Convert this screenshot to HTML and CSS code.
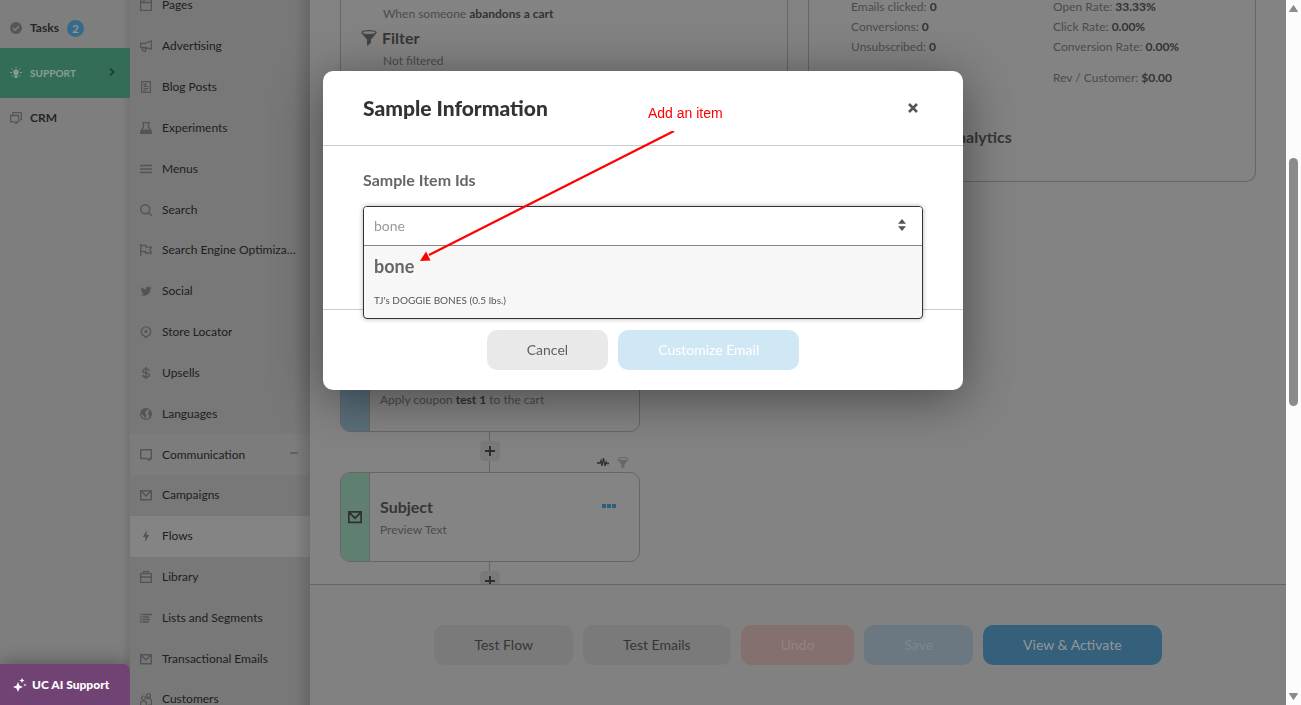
FILE: index.html
```html
<!DOCTYPE html>
<html lang="en">
<head>
<meta charset="utf-8">
<title>Flows</title>
<link rel="stylesheet" href="styles.css">
</head>
<body>
<svg class="defs" aria-hidden="true">
  <symbol id="mail" viewBox="0 0 12 12"><path d="M.7 1.700h10.600v9H.7zM1 2l5 5 5-5" fill="none" stroke="currentColor" stroke-width="1.500"/></symbol>
  <symbol id="funnel" viewBox="0 0 16 16"><ellipse cx="8" cy="2.600" rx="7" ry="2" fill="none" stroke="currentColor" stroke-width="1.200"/><path d="M.6 3.400C3 5.400 13 5.400 15.400 3.400L10 9.500V13l-4 3V9.500z" fill="currentColor"/></symbol>
  <symbol id="plus" viewBox="0 0 10 10"><path d="M5 0v10M0 5h10" stroke="currentColor" stroke-width="2"/></symbol>
</svg>
<div class="app">
  <aside class="rail">
    <nav class="rail-nav">
      <a class="rail-link" href="#"><svg class="icon faint" viewBox="0 0 12 12"><circle cx="6" cy="6" r="6" fill="currentColor"/><path d="M3 6l2.200 2.200L9 4.300" fill="none" stroke="#7f7f7f" stroke-width="1.500"/></svg>Tasks<span class="count">2</span></a>
      <a class="rail-link support" href="#"><svg class="icon" viewBox="0 0 12 12"><path d="M6 2.500a2.800 2.800 0 0 0-1.500 5.200V11h3V7.700A2.800 2.800 0 0 0 6 2.500z" fill="currentColor"/><path d="M6 0v1.500M0 5.500h2M10 5.500h2M1.500 1.500l1.300 1.300M10.500 1.500L9.200 2.800M1.500 9.500l1.300-1.200M10.500 9.500L9.200 8.300" stroke="currentColor"/></svg>SUPPORT<svg class="chevron" viewBox="0 0 6 8"><path d="M1 .5L4.500 4 1 7.500" fill="none" stroke="currentColor" stroke-width="1.600"/></svg></a>
      <a class="rail-link" href="#"><svg class="icon faint" viewBox="0 0 12 12"><path d="M3 2.500V.6h8.400v7H10M.6 3.500h8v6.400H6.500V12L4.500 9.900H.6z" fill="none" stroke="currentColor" stroke-width="1.300"/></svg>CRM</a>
    </nav>
    <button class="ai-button" type="button"><svg class="spark" viewBox="0 0 14 14"><path d="M5 4l1.400 3.600L10 9l-3.600 1.400L5 14l-1.400-3.600L0 9l3.600-1.400zM9 0l.8 1.700 1.700.8-1.700.8L9 5l-.8-1.700-1.700-.8 1.700-.8zM12 5.500l.4 1.100 1.100.4-1.100.4L12 8.500l-.4-1.100-1.100-.4 1.100-.4z" fill="currentColor"/></svg>UC AI Support</button>
  </aside>

  <nav class="menu">
    <ul class="menu-list">
      <li><a href="#"><svg class="icon" viewBox="0 0 12 12"><path d="M.6.6h10.800v10.800H.6zM.6 3.500h10.800M4 .6v2.900" fill="none" stroke="currentColor" stroke-width="1.300"/></svg><span>Pages</span></a></li>
      <li><a href="#"><svg class="icon" viewBox="0 0 12 12"><path d="M11.400 1v8L5 7.500H.6v-4H5zM2.500 7.500v3l3 1V8" fill="none" stroke="currentColor" stroke-width="1.300"/></svg><span>Advertising</span></a></li>
      <li><a href="#"><svg class="icon" viewBox="0 0 12 12"><path d="M1.600.6h8.800v10.800H1.600zM3.500 5.500h5M3.500 7.500h5M3.500 9.300h3" fill="none" stroke="currentColor" stroke-width="1.200"/><path d="M3.500 2.500h3v2h-3z" fill="currentColor"/></svg><span>Blog Posts</span></a></li>
      <li><a href="#"><svg class="icon" viewBox="0 0 12 12"><path d="M2 .6h8M3.500.6V5L.8 9v2.400h10.400V9L8.500 5V.6" fill="none" stroke="currentColor" stroke-width="1.300"/><path d="M2.500 7.500h7l2 2.500v2H.6v-2z" fill="currentColor"/></svg><span>Experiments</span></a></li>
      <li><a href="#"><svg class="icon" viewBox="0 0 12 12"><path d="M0 2.500h12M0 6h12M0 9.500h12" stroke="currentColor" stroke-width="1.300"/></svg><span>Menus</span></a></li>
      <li><a href="#"><svg class="icon" viewBox="0 0 12 12"><circle cx="5.200" cy="5.200" r="4.500" fill="none" stroke="currentColor" stroke-width="1.400"/><path d="M8.500 8.500L12 12" stroke="currentColor" stroke-width="1.500"/></svg><span>Search</span></a></li>
      <li><a href="#"><svg class="icon" viewBox="0 0 12 12"><path d="M.7 0v12M.6 1.500H6v1.700h5.400L10 6l1.400 3H5.500V7.500H.6" fill="none" stroke="currentColor" stroke-width="1.300"/></svg><span>Search Engine Optimization</span></a></li>
      <li><a href="#"><svg class="icon" viewBox="0 0 24 24"><path d="M23 5.500a9 9 0 0 1-2.600.7 4.500 4.500 0 0 0 2-2.500 9 9 0 0 1-2.900 1.100A4.500 4.500 0 0 0 11.800 9 12.800 12.800 0 0 1 2.500 4.200a4.500 4.500 0 0 0 1.400 6 4.500 4.500 0 0 1-2-.5c0 2.200 1.500 4 3.600 4.500a4.500 4.500 0 0 1-2 .1 4.500 4.500 0 0 0 4.200 3.100A9 9 0 0 1 1 19.300 12.800 12.800 0 0 0 20.700 7.900 9 9 0 0 0 23 5.500z" fill="currentColor"/></svg><span>Social</span></a></li>
      <li><a href="#"><svg class="icon" viewBox="0 0 12 12"><path d="M6 11.400L2.500 8.700a4.700 4.700 0 1 1 7 0z" fill="none" stroke="currentColor" stroke-width="1.400"/><circle cx="6" cy="5.500" r="1.500" fill="currentColor"/></svg><span>Store Locator</span></a></li>
      <li><a href="#"><svg class="icon" viewBox="0 0 12 12"><path d="M9.200 3.600C8.600 2.300 7.500 1.900 6 1.900c-1.900 0-3 .7-3 2 0 3 6.300 1 6.300 4 0 1.500-1.200 2.200-3.300 2.200-1.800 0-3-.7-3.400-2.100M6 0v12" fill="none" stroke="currentColor" stroke-width="1.400"/></svg><span>Upsells</span></a></li>
      <li><a href="#"><svg class="icon" viewBox="0 0 12 12"><circle cx="6" cy="6" r="5.400" fill="none" stroke="currentColor" stroke-width="1.200"/><path d="M3 1.500L7.500 1 6 3.200 4.800 5l1.700 1.500L6 8.500 5 11 4 8 1 5.500zM8 3l3 1v4L9.500 9 8.500 6.500z" fill="currentColor"/></svg><span>Languages</span></a></li>
      <li class="open"><a href="#"><svg class="icon" viewBox="0 0 12 12"><path d="M.7.7h10.600v8.800H9.500v2L6.500 9.500H.7z" fill="none" stroke="currentColor" stroke-width="1.400"/></svg><span>Communication</span><i class="minus"></i></a></li>
      <li><a href="#"><svg class="icon"><use href="#mail"/></svg><span>Campaigns</span></a></li>
      <li class="current"><a href="#"><svg class="icon" viewBox="0 0 12 12"><path d="M6.800 0L2.800 7h2.700L5 12l4.200-7H6.500z" fill="currentColor"/></svg><span>Flows</span></a></li>
      <li><a href="#"><svg class="icon" viewBox="0 0 12 12"><path d="M.6 2.600h10.800v8.800H.6zM.6 6h10.800M3.500 2.600V.6h5v2" fill="none" stroke="currentColor" stroke-width="1.300"/></svg><span>Library</span></a></li>
      <li><a href="#"><svg class="icon" viewBox="0 0 12 12"><path d="M0 2.500h1.500M2.500 2.500H12M0 5h1.500M2.500 5H9M0 7.500h1.500M2.500 7.500H10M0 10h1.500M2.500 10H9" stroke="currentColor" stroke-width="1.300"/></svg><span>Lists and Segments</span></a></li>
      <li><a href="#"><svg class="icon"><use href="#mail"/></svg><span>Transactional Emails</span></a></li>
      <li><a href="#"><svg class="icon" viewBox="0 0 12 12"><circle cx="3.500" cy="5" r="2" fill="none" stroke="currentColor" stroke-width="1.200"/><circle cx="8.500" cy="2.600" r="2" fill="none" stroke="currentColor" stroke-width="1.200"/><path d="M.6 12V9.500l1.500-1.300h2.800l1.500 1.300V12M6.500 6l.8-.6h2.400l1.700 1.300V12H8" fill="none" stroke="currentColor" stroke-width="1.200"/></svg><span>Customers</span></a></li>
    </ul>
  </nav>

  <main class="main">
    <div class="canvas">
      <div class="summary">
        <section class="card trigger">
          <p class="indent">When someone <b>abandons a cart</b></p>
          <h2 class="filter-title"><svg class="funnel"><use href="#funnel"/></svg>Filter</h2>
          <p class="indent">Not filtered</p>
        </section>
        <section class="card stats">
          <div class="stat-columns">
            <div class="stat-list">
              <p>Emails clicked: <b>0</b></p>
              <p>Conversions: <b>0</b></p>
              <p>Unsubscribed: <b>0</b></p>
            </div>
            <div class="stat-list">
              <p>Open Rate: <b>33.33%</b></p>
              <p>Click Rate: <b>0.00%</b></p>
              <p>Conversion Rate: <b>0.00%</b></p>
              <p class="revenue">Rev / Customer: <b>$0.00</b></p>
            </div>
          </div>
          <h2 class="analytics">Analytics</h2>
        </section>
      </div>

      <div class="flow">
        <article class="step coupon">
          <div class="strip"></div>
          <div class="step-body"><h3>Coupon</h3><p>Apply coupon <b>test 1</b> to the cart</p></div>
        </article>
        <div class="link"><button type="button" class="add" aria-label="Add step"><svg><use href="#plus"/></svg></button></div>
        <article class="step email">
          <div class="strip"><svg class="strip-icon"><use href="#mail"/></svg></div>
          <div class="step-body"><h3>Subject</h3><p>Preview Text</p></div>
          <button type="button" class="more" aria-label="More"><i></i><i></i><i></i></button>
          <div class="flags">
            <svg class="pulse" viewBox="0 0 12 12"><path d="M0 6h3l1-2.500L5 9l1.500-8L8 9l1.200-4 .8 1.500h2" fill="none" stroke="currentColor" stroke-width="1.300"/></svg>
            <svg class="small-funnel"><use href="#funnel"/></svg>
          </div>
        </article>
        <div class="link"><button type="button" class="add" aria-label="Add step"><svg><use href="#plus"/></svg></button></div>
      </div>
    </div>
    <footer class="actions">
      <button type="button" class="btn dim">Test Flow</button>
      <button type="button" class="btn dim">Test Emails</button>
      <button type="button" class="btn undo">Undo</button>
      <button type="button" class="btn save">Save</button>
      <button type="button" class="btn activate">View &amp; Activate</button>
    </footer>
  </main>

  <div class="scrollbar" aria-hidden="true">
    <svg class="arrow" viewBox="0 0 9 7"><path d="M4.500.5L8.500 6.500h-8z" fill="currentColor" stroke="currentColor" stroke-linejoin="round"/></svg>
    <div class="track"><div class="thumb"></div></div>
    <svg class="arrow" viewBox="0 0 9 7"><path d="M4.500 6.500L8.500.5h-8z" fill="currentColor" stroke="currentColor" stroke-linejoin="round"/></svg>
  </div>
</div>

<div class="layer">
  <section class="dialog" role="dialog" aria-labelledby="dialog-title">
    <header class="dialog-head">
      <h1 id="dialog-title">Sample Information</h1>
      <button type="button" class="close" aria-label="Close"><svg viewBox="0 0 10 10"><path d="M1 1l8 8M9 1L1 9" stroke="currentColor" stroke-width="2.500"/></svg></button>
    </header>
    <div class="dialog-body">
      <label for="item">Sample Item Ids</label>
      <div class="picker-slot">
        <div class="picker">
          <div class="picker-field">
            <input id="item" type="text" value="bone">
            <svg class="sort" viewBox="0 0 8 12"><path d="M4 0l4 4.700H0zM4 12l4-4.700H0z" fill="currentColor"/></svg>
          </div>
          <div class="option"><strong>bone</strong><span>TJ's DOGGIE BONES (0.5 lbs.)</span></div>
        </div>
      </div>
    </div>
    <footer class="dialog-foot">
      <button type="button" class="btn cancel">Cancel</button>
      <button type="button" class="btn customize">Customize Email</button>
    </footer>
    <div class="note">Add an item</div>
    <svg class="pointer" viewBox="0 0 256 132" aria-hidden="true"><path d="M254 0L9 124" stroke="#f00" stroke-width="2.200"/><path d="M0 130L6 120.500L10.500 129.500z" fill="#f00"/></svg>
  </section>
</div>
</body>
</html>
```

FILE: styles.css
```css
* { box-sizing: border-box; }
body { margin: 0; height: 100vh; overflow: hidden; font: 12px/20px Lato, sans-serif; color: #4b4b4b; background: #838383; }
h1, h2, h3, p, ul { margin: 0; padding: 0; }
button { border: 0; padding: 0; font: inherit; color: inherit; background: none; }
a { color: inherit; text-decoration: none; }
b { color: #333; }
.defs { display: none; }
.app { display: flex; height: 100%; }
.icon { width: 12px; height: 12px; flex: none; }

.rail { width: 130px; flex: none; display: flex; flex-direction: column; justify-content: space-between; background: linear-gradient(to left, #737373, #7e7e7e 8px); }
.rail-nav { padding-top: 8px; }
.rail-link { display: flex; align-items: center; gap: 8px; height: 40px; padding: 0 10px; font-weight: 700; color: #262626; }
.faint { color: #565656; }
.count { width: 17px; height: 17px; border-radius: 50%; background: #366a89; color: #929292; line-height: 17px; text-align: center; }
.support { height: 50px; background: #336d55; color: #829c91; font-size: 10px; font-weight: 900; }
.chevron { width: 6px; height: 8px; margin: 0 5px 2px auto; color: #1b3c2f; }
.ai-button { display: flex; align-items: center; gap: 5px; height: 41px; padding-left: 13px; border-radius: 0 7px 0 0; background: #714375; color: #fff; font-size: 12px; font-weight: 900; box-shadow: 0 0 20px rgba(0, 0, 0, .35); }
.spark { width: 14px; height: 14px; }

.menu { width: 180px; flex: none; overflow: hidden; background: #787878; }
.menu-list { display: flex; flex-direction: column; height: 735px; margin-top: -15px; list-style: none; }
.menu-list li { flex: 1; }
.menu-list a { display: flex; align-items: center; gap: 10px; height: 100%; padding: 0 14px 0 10px; color: #202020; background: linear-gradient(to left, rgba(0, 0, 0, .14), transparent 16px); }
.menu-list span { overflow: hidden; text-overflow: ellipsis; white-space: nowrap; }
.menu-list .icon { color: #545454; }
.open { background: #7c7c7c; }
.current { background: #848484; }
.minus { width: 8px; height: 2px; margin: 0 -2px 4px auto; background: #626262; flex: none; }

.main { flex: 1; min-width: 0; display: flex; flex-direction: column; }
.canvas { flex: 1; min-height: 0; overflow: hidden; padding: 0 30px; }
.summary { display: grid; grid-template-columns: 1fr 1fr; gap: 20px; }
.card { height: 182px; border: 1px solid #666; border-top: 0; border-radius: 0 0 10px 10px; }
.trigger { padding: 4px 20px; }
.indent { padding-left: 22px; }
.filter-title { display: flex; align-items: center; gap: 5px; height: 27px; font-size: 16px; color: #363636; }
.funnel { width: 16px; height: 16px; color: #444; }
.stats { padding: 0 42px; }
.stat-columns { display: grid; grid-template-columns: 202px 1fr; height: 119px; margin-top: -3px; }
.stat-list p { line-height: 20px; }
.stat-list .revenue { padding-top: 11px; }
.analytics { padding-top: 11px; padding-left: 95px; font-size: 16px; color: #363636; }
.flow { width: 300px; padding-top: 160px; }
.step { position: relative; display: flex; height: 90px; border: 1px solid #666; border-radius: 10px; background: #848484; }
.strip { width: 29px; display: flex; align-items: center; justify-content: center; border-right: 1px solid #666; border-radius: 9px 0 0 9px; }
.coupon .strip { background: #5a6f7c; }
.email .strip { background: #5f8070; }
.strip-icon { width: 14px; height: 14px; color: #303030; }
.step-body { padding: 23px 10px; }
.step h3 { font-size: 16px; line-height: 22px; color: #363636; }
.step p { line-height: 24px; }
.more { display: flex; gap: 1px; margin: 31px 23px 0 auto; height: 4px; }
.more i { width: 4px; height: 4px; background: #2e5f7d; }
.flags { position: absolute; top: -16px; right: 10px; display: flex; gap: 8px; }
.pulse { width: 12px; height: 12px; color: #303030; }
.small-funnel { width: 12px; height: 12px; color: #666; }
.link { display: flex; justify-content: center; align-items: center; height: 38px; margin-bottom: 2px; background: linear-gradient(to right, #666 50%, transparent 50%) center / 2px 100% no-repeat; }
.link + .step { margin-top: 2px; }
.link { height: 40px; margin: 0; padding-bottom: 2px; }
.link + .step { margin: 0; }
.add { display: grid; place-items: center; width: 20px; height: 20px; border-radius: 4px; background: #7a7a7a; color: #2e2e2e; }
.add svg { width: 10px; height: 10px; }
.actions { display: flex; justify-content: center; gap: 10px; padding: 40px 0; border-top: 1px solid #666; background: #818181; }
.btn { height: 40px; padding: 0 40px; border-radius: 10px; font-size: 14px; }
.dim { background: #7a7a7a; color: #363636; }
.undo { background: #857070; color: #908484; }
.save { background: #6b7881; color: #7f868a; }
.activate { background: #35607b; color: #939799; }

.scrollbar { width: 15px; flex: none; display: flex; flex-direction: column; align-items: center; padding: 5px 0; background: #fcfcfc; color: #8b8b8b; }
.arrow { width: 9px; height: 7px; }
.track { flex: 1; padding-top: 146px; }
.thumb { width: 9px; height: 248px; border-radius: 5px; background: #8b8b8b; }

.layer { position: fixed; inset: 0 15px 0 0; display: flex; justify-content: center; align-items: flex-start; padding-top: 71px; overflow: hidden; }
.dialog { position: relative; width: 640px; border-radius: 10px; background: #fff; box-shadow: 0 8px 50px rgba(0, 0, 0, .45); }
.dialog-head { display: flex; align-items: center; justify-content: space-between; height: 75px; padding: 0 45px 0 40px; border-bottom: 1px solid #ccc; }
.dialog-head h1 { font-size: 21px; font-weight: 900; color: #333; }
.close { width: 10px; height: 10px; color: #555; }
.close svg { display: block; }
.dialog-body { height: 164px; padding: 24px 40px; border-bottom: 1px solid #ccc; }
.dialog-body label { display: block; height: 36px; font-size: 16px; font-weight: 700; color: #666; }
.picker-slot { position: relative; height: 40px; }
.picker { position: absolute; inset: 0 0 auto; z-index: 1; border: 1px solid #333; border-radius: 4px; background: #f7f7f7; box-shadow: 0 0 5px rgba(0, 0, 0, .3); overflow: hidden; }
.picker-field { display: flex; align-items: center; height: 39px; padding: 0 16px 2px 10px; border-bottom: 1px solid #888; background: #fff; }
.picker-field input { flex: 1; border: 0; padding: 0; outline: 0; font: 14px Lato, sans-serif; color: #999; }
.sort { width: 8px; height: 12px; color: #555; }
.option { display: flex; flex-direction: column; height: 72px; padding: 8px 10px; color: #666; }
.option strong { font-size: 18px; line-height: 24px; }
.option span { padding-top: 12px; font-size: 10px; color: #555; }
.dialog-foot { display: flex; justify-content: center; gap: 10px; padding: 20px 0; }
.cancel { background: #e9e9e9; color: #606060; }
.customize { background: #d0e8f6; color: #fff; }
.note { position: absolute; left: 325px; top: 32px; z-index: 2; font: 14px/20px "Liberation Sans", Arial, sans-serif; color: #f00; }
.pointer { position: absolute; left: 97px; top: 60px; z-index: 2; width: 256px; height: 132px; }
```
